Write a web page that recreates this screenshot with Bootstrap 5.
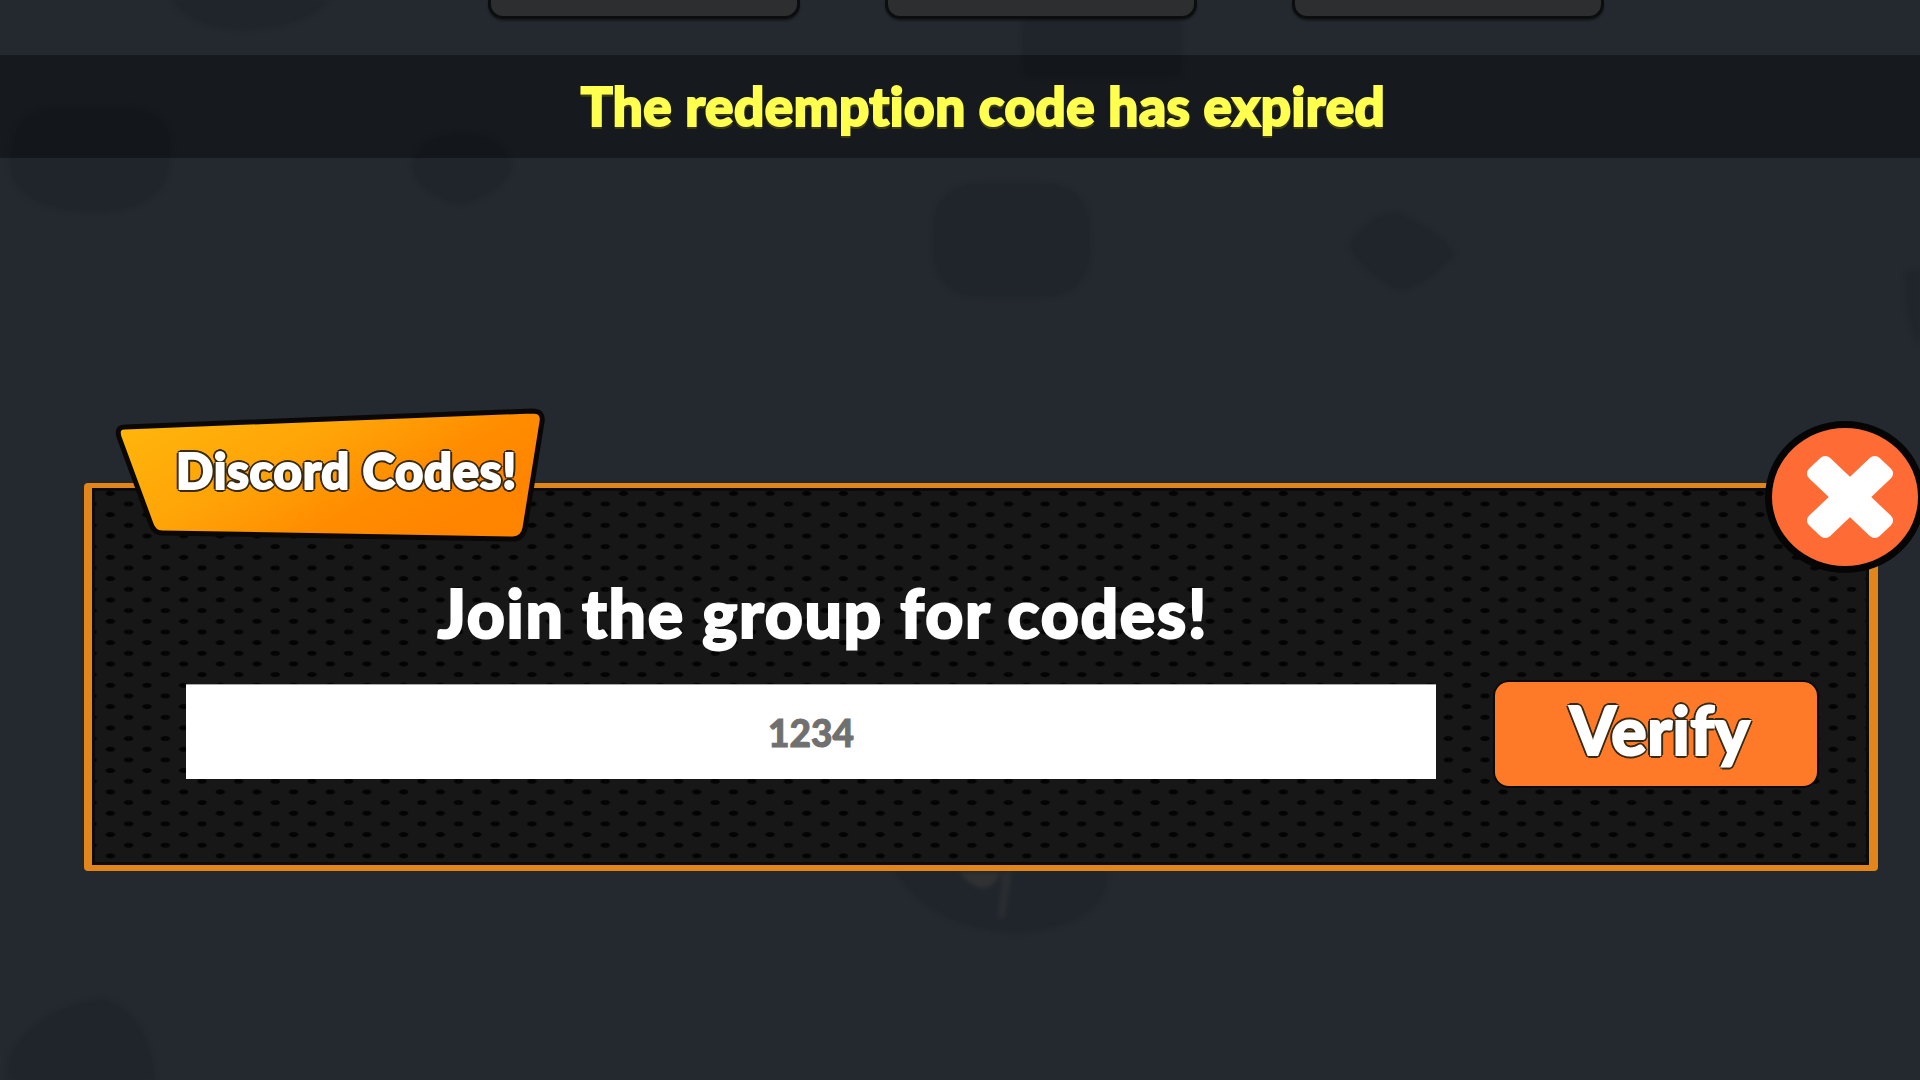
<!DOCTYPE html>
<html lang="en">
<head>
<meta charset="utf-8">
<title>Discord Codes</title>
<link href="https://cdn.jsdelivr.net/npm/bootstrap@5.3.0/dist/css/bootstrap.min.css" rel="stylesheet">
<style>
html,body{height:100%;}
body{background:#23292f;overflow:hidden;font-family:"Lato","Liberation Sans",sans-serif;font-weight:900;}
.scene{width:1920px;height:1080px;}
.blobs{top:0;left:0;filter:blur(2px);}
.blobs path,.blobs rect{fill:#1f252b;}
.tab-strip{height:55px;padding-left:488px;}
.tab-item{width:312px;height:19px;background:#2d2e30;border:3px solid #0c0d0f;border-top:0;border-radius:0 0 15px 15px;box-shadow:0 2px 2px rgba(0,0,0,.35);}
.tab-gap-a{margin-left:85px;}
.tab-gap-b{margin-left:95px;}
.notice{height:103px;background:rgba(0,0,0,.36);padding-left:46px;padding-bottom:2px;}
.notice-text{font-size:53px;line-height:1;color:#ffff4f;letter-spacing:.5px;-webkit-text-stroke:2px #ffff4f;text-shadow:0 3px 0 #3b3a12,1px 3px 0 #3b3a12,-1px 3px 0 #3b3a12;}
.panel-box{margin-top:325px;margin-left:84px;width:1794px;height:388px;border-style:solid;border-color:#e2851a;border-width:5px 9px 6px 8px;border-radius:4px;background-color:#171717;background-image:radial-gradient(ellipse 5.5px 2.8px at 50% 25%,#030303 70%,transparent 100%),radial-gradient(ellipse 5.5px 2.8px at 0% 75%,#030303 70%,transparent 100%),radial-gradient(ellipse 5.5px 2.8px at 100% 75%,#030303 70%,transparent 100%);background-size:36.67px 21.33px;box-shadow:inset 0 0 0 3px #0b0b0b;padding-left:94px;}
.join-title{font-size:66px;line-height:1;color:#fff;margin:92px 0 0 0;padding-left:24px;width:1250px;text-align:center;letter-spacing:1.7px;-webkit-text-stroke:2px #fff;font-weight:900;}
.code-row{margin-top:38px;}
.code-input.form-control{width:1250px;height:95px;border-radius:0;border:0;border-top:1px solid #aaa;background:#fff;font-size:37px;font-weight:900;text-align:center;padding:0;box-shadow:none;}
.code-input::placeholder{color:#707070;opacity:1;-webkit-text-stroke:1px #707070;}
.verify-btn.btn{width:322px;height:104px;margin-left:59px;margin-top:-2px;padding:0 0 8px 8px;background:#ff7a28;border:0;border-radius:14px;box-shadow:0 0 0 2px #0b0b0b;color:#fff;font-size:66px;font-weight:900;line-height:1;letter-spacing:.5px;-webkit-text-stroke:2px #fff;text-shadow:3px 0 0 #3b2a12,-3px 0 0 #3b2a12,0 3px 0 #3b2a12,0 -3px 0 #3b2a12,2px 2px 0 #3b2a12,-2px 2px 0 #3b2a12,2px -2px 0 #3b2a12,-2px -2px 0 #3b2a12;}
.tag-wrap{left:16px;top:-82px;width:444px;height:142px;}
.tag-wrap svg{left:0;top:0;}
.tag-text{left:68px;top:40px;font-size:49px;line-height:1;color:#fff;letter-spacing:.75px;white-space:nowrap;-webkit-text-stroke:2px #fff;text-shadow:3px 0 0 #3a2a10,-3px 0 0 #3a2a10,0 3px 0 #3a2a10,0 -3px 0 #3a2a10,2px 2px 0 #3a2a10,-2px 2px 0 #3a2a10,2px -2px 0 #3a2a10,-2px -2px 0 #3a2a10;}
.close-disc.btn{right:-56px;top:-67px;width:160px;height:152px;padding:0 0 0 10px;border:7px solid #050505;border-radius:50%;background:#ff6b35;}
</style>
</head>
<body>
<div class="scene position-relative">
  <svg class="blobs position-absolute" width="1920" height="1080" viewBox="0 0 1920 1080" aria-hidden="true">
    <path d="M10 150Q14 108 60 107L130 107Q172 110 172 150L166 180Q150 212 95 212Q20 212 10 170Z"/>
    <path d="M411 165Q420 132 462 132Q512 135 512 170Q500 195 460 205Q418 195 411 165Z"/>
    <rect x="933" y="183" width="157" height="114" rx="42"/>
    <path d="M1349 245Q1370 212 1398 212Q1454 240 1454 256Q1420 290 1398 290Q1360 272 1349 245Z"/>
    <path d="M171 0H330Q300 30 240 30Q190 28 171 0Z"/>
    <rect x="1022" y="18" width="160" height="60" rx="8"/>
    <path d="M1905 272Q1920 268 1920 270V345Q1905 330 1905 272Z"/>
    <path d="M894 870H1108Q1110 925 1020 933Q930 930 894 870Z"/>
    <path d="M8 1060Q30 1010 100 998Q150 1010 155 1080H8Z"/>
    <path d="M1002 872L1012 872L1005 918L998 918Z" style="fill:#2a2d30"/>
    <path d="M960 872H1000Q995 890 980 888Q966 884 960 872Z" style="fill:#2f3132"/>
  </svg>
  <div class="position-relative">
    <div class="tab-strip d-flex align-items-start">
      <div class="tab-item"></div>
      <div class="tab-item tab-gap-a"></div>
      <div class="tab-item tab-gap-b"></div>
    </div>
    <div class="notice d-flex align-items-center justify-content-center">
      <span class="notice-text">The redemption code has expired</span>
    </div>
    <div class="panel-box position-relative">
      <div class="tag-wrap position-absolute">
        <svg class="position-absolute" width="444" height="142" viewBox="0 0 444 142" aria-hidden="true">
          <defs>
            <linearGradient id="tagFill" x1="0" y1="0" x2="1" y2="0.55">
              <stop offset="0" stop-color="#ffb80c"/>
              <stop offset=".45" stop-color="#ffa408"/>
              <stop offset=".75" stop-color="#ff8c00"/>
              <stop offset="1" stop-color="#ff8400"/>
            </linearGradient>
          </defs>
          <path d="M17 21L424 5Q436 5 434 16L417 122Q415 133 405 133L54 127Q46 127 43 118L11 31Q8 21 17 21Z" fill="url(#tagFill)" stroke="#0a0806" stroke-width="5" stroke-linejoin="round"/>
        </svg>
        <span class="tag-text position-absolute">Discord Codes!</span>
      </div>
      <h1 class="join-title">Join the group for codes!</h1>
      <div class="code-row d-flex align-items-start">
        <input class="form-control code-input" type="text" placeholder="1234" aria-label="Code">
        <button class="btn verify-btn" type="button">Verify</button>
      </div>
      <button class="btn close-disc position-absolute d-flex align-items-center justify-content-center" type="button" aria-label="Close">
        <svg width="94" height="90" viewBox="0 0 94 90" aria-hidden="true">
          <g transform="translate(47 45) scale(1 .95) rotate(45)" fill="#fff">
            <rect x="-50" y="-15" width="100" height="30" rx="7"/>
            <rect x="-15" y="-50" width="30" height="100" rx="7"/>
          </g>
        </svg>
      </button>
    </div>
  </div>
</div>
<script src="https://cdn.jsdelivr.net/npm/bootstrap@5.3.0/dist/js/bootstrap.bundle.min.js"></script>
</body>
</html>
